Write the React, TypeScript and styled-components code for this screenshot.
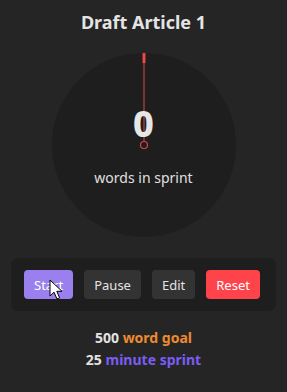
import React from "react";
import styled, { createGlobalStyle } from "styled-components";

const GlobalStyle = createGlobalStyle`
  html, body {
    margin: 0;
    padding: 0;
    background: #252525;
  }
  body {
    font-family: "Noto Sans", "Open Sans", sans-serif;
    color: #e2e2e2;
  }
`;

const Page = styled.div`
  width: 287px;
  height: 392px;
  display: flex;
  flex-direction: column;
  align-items: center;
  padding-top: 9px;
  box-sizing: border-box;
  position: relative;
  overflow: hidden;
`;

const Title = styled.h2`
  margin: 0;
  font-size: 18px;
  line-height: 26px;
  font-weight: 700;
  color: #e4e4e4;
`;

const Dial = styled.div`
  margin-top: 18px;
  width: 184px;
  height: 184px;
  border-radius: 50%;
  background: #1e1e1e;
  position: relative;
  display: flex;
  flex-direction: column;
  align-items: center;
`;

const Needle = styled.svg`
  position: absolute;
  left: 0;
  top: 0;
  width: 184px;
  height: 184px;
`;

const Count = styled.div`
  position: relative;
  margin-top: 51px;
  font-size: 36px;
  line-height: 40px;
  font-weight: 800;
  color: #e6e6e6;
`;

const Label = styled.div`
  margin-top: 25px;
  font-size: 14px;
  line-height: 18px;
  color: #e0e0e0;
`;

const Controls = styled.div`
  margin-top: 21px;
  width: 265px;
  box-sizing: border-box;
  padding: 12px 13px;
  border-radius: 7px;
  background: #1e1e1e;
  display: flex;
  gap: 11px;
`;

type Tone = "primary" | "plain" | "danger";

const tones: Record<Tone, string> = {
  primary: "#9a7fee",
  plain: "#333333",
  danger: "#fe434b",
};

const Button = styled.button<{ $tone: Tone }>`
  height: 29px;
  padding: 0 10px;
  border: none;
  border-radius: 4px;
  background: ${({ $tone }) => tones[$tone]};
  color: ${({ $tone }) => ($tone === "plain" ? "#e4e4e4" : "#ffffff")};
  font-family: inherit;
  font-size: 13px;
  cursor: pointer;
`;

const Stats = styled.div`
  margin-top: 16px;
  display: flex;
  flex-direction: column;
  align-items: center;
  font-size: 14px;
  line-height: 22px;
  font-weight: 700;
  color: #e2e2e2;
`;

const Accent = styled.span<{ $color: string }>`
  color: ${({ $color }) => $color};
`;

const Pointer = styled.svg`
  position: absolute;
  left: 49px;
  top: 279px;
  width: 14px;
  height: 22px;
`;

export default function App() {
  return (
    <Page>
      <GlobalStyle />
      <Title>Draft Article 1</Title>
      <Dial>
        <Needle viewBox="0 0 184 184">
          <rect x="90.5" y="0" width="3" height="10" fill="#f0434a" />
          <line x1="92" y1="10" x2="92" y2="88" stroke="#e0444a" strokeWidth="1" />
          <circle cx="92" cy="92" r="3.5" fill="#1e1e1e" stroke="#d8434a" strokeWidth="1.2" />
        </Needle>
        <Count>0</Count>
        <Label>words in sprint</Label>
      </Dial>
      <Controls>
        <Button $tone="primary">Start</Button>
        <Button $tone="plain">Pause</Button>
        <Button $tone="plain">Edit</Button>
        <Button $tone="danger">Reset</Button>
      </Controls>
      <Stats>
        <div>
          500 <Accent $color="#ee8a30">word goal</Accent>
        </div>
        <div>
          25 <Accent $color="#7b5cf4">minute sprint</Accent>
        </div>
      </Stats>
      <Pointer viewBox="0 0 14 22">
        <path
          d="M1 1 L1 17 L5 13.2 L8 20 L10.6 18.8 L7.8 12.3 L13 12.3 Z"
          fill="#ffffff"
          stroke="#000000"
          strokeWidth="1"
          strokeLinejoin="round"
        />
      </Pointer>
    </Page>
  );
}
